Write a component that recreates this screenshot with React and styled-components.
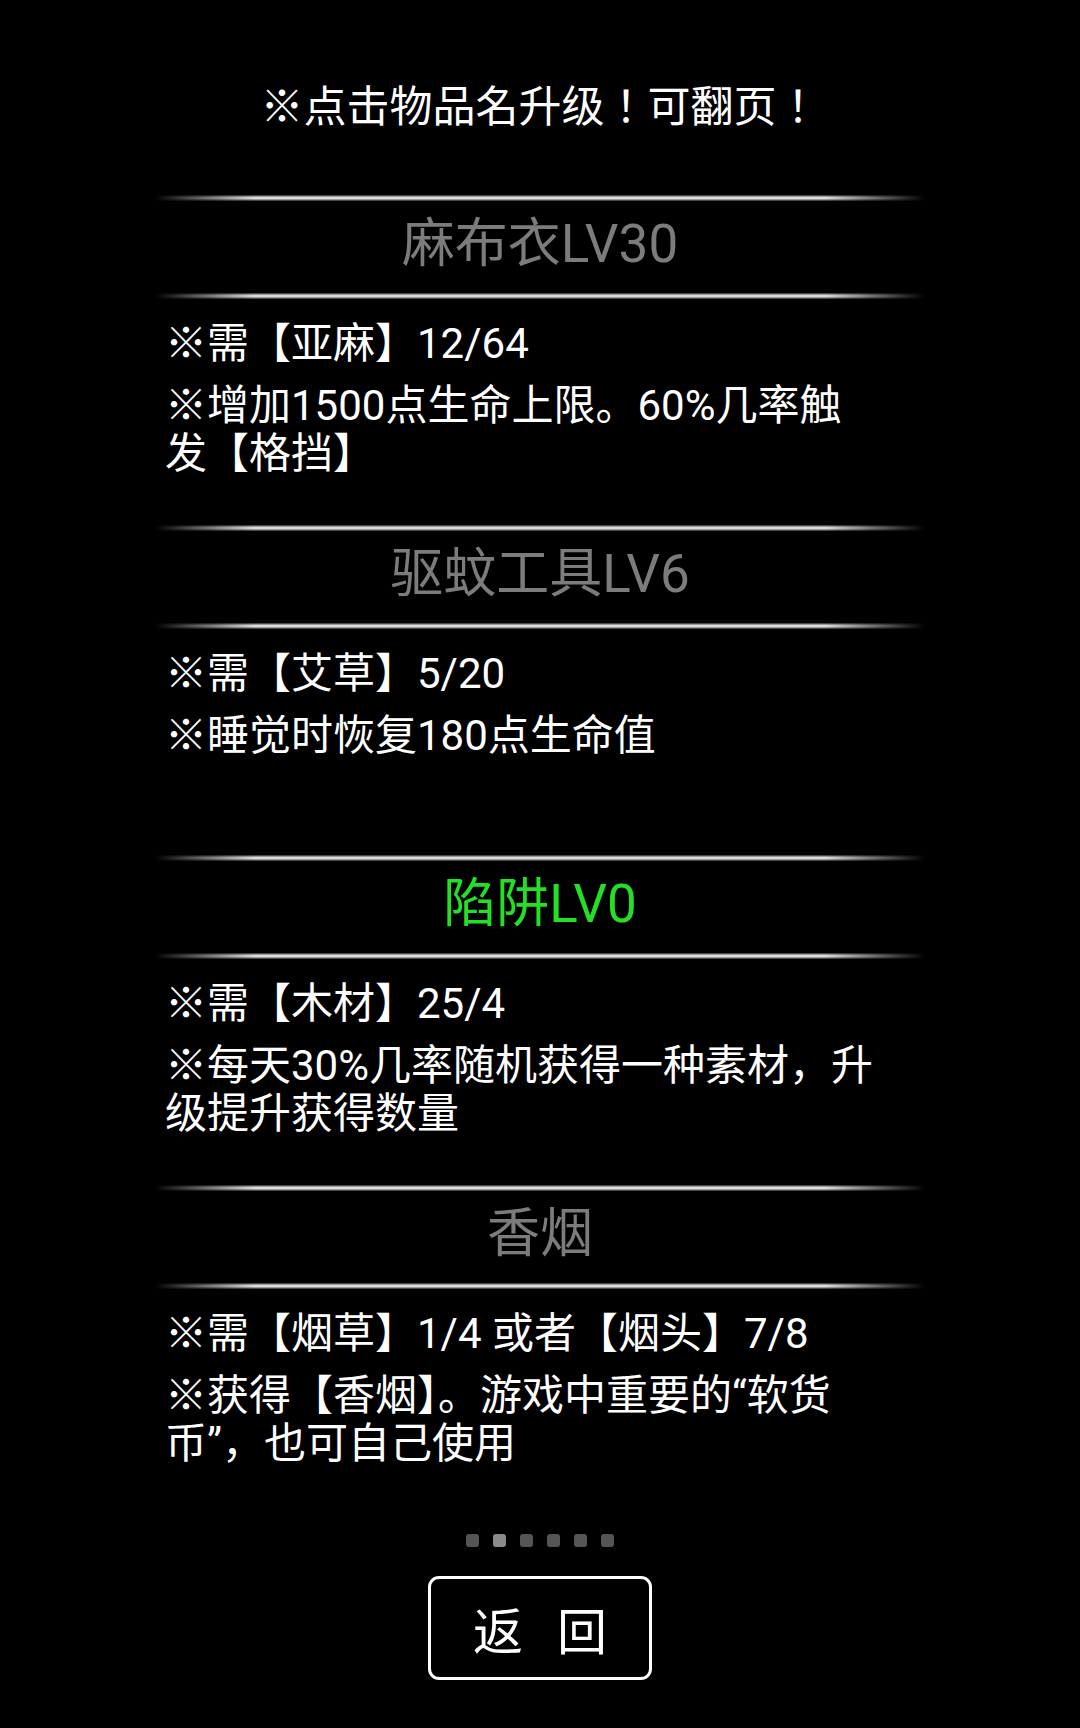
import React from 'react'
import styled, { createGlobalStyle } from 'styled-components'

const GlobalStyle = createGlobalStyle`
  html, body {
    margin: 0;
    padding: 0;
    background: #000;
  }
  body {
    font-family: Roboto, "Noto Sans CJK SC", sans-serif;
    color: #fff;
  }
`

const Screen = styled.div`
  width: 1080px;
  min-height: 1728px;
  background: #000;
  display: flex;
  flex-direction: column;
  align-items: center;
`

const Hint = styled.div`
  margin-top: 78px;
  height: 118px;
  font-size: 43px;
  line-height: 50px;
  color: #fff;
  font-family: "Noto Sans CJK TC", "Noto Sans CJK SC", sans-serif;
`

const List = styled.div`
  width: 770px;
  display: flex;
  flex-direction: column;
`

const Item = styled.div`
  height: 330px;
  display: flex;
  flex-direction: column;
`

const Divider = styled.div`
  height: 6px;
  margin: -1px 0;
  background: linear-gradient(
    to bottom,
    rgba(90, 90, 90, 0.35),
    #dcdcdc 38%,
    #dcdcdc 62%,
    rgba(90, 90, 90, 0.35)
  );
  -webkit-mask-image: linear-gradient(to right, transparent 0, #000 13%, #000 87%, transparent 100%);
  mask-image: linear-gradient(to right, transparent 0, #000 13%, #000 87%, transparent 100%);
`

const Name = styled.div`
  height: 94px;
  box-sizing: border-box;
  padding-bottom: 16px;
  display: flex;
  align-items: center;
  justify-content: center;
  font-size: 53px;
  color: ${props => (props.$active ? '#24e024' : '#7c7c7c')};
  cursor: pointer;
`

const Desc = styled.div`
  padding: 22px 0 0 10px;
  display: flex;
  flex-direction: column;
  gap: 14px;
`

const Line = styled.p`
  margin: 0;
  font-size: 42px;
  line-height: 48px;
  color: #fff;
  white-space: nowrap;
`

const Dots = styled.div`
  margin-top: 18px;
  display: flex;
  gap: 14px;
`

const Dot = styled.span`
  width: 13px;
  height: 13px;
  border-radius: 3px;
  background: ${props => (props.$current ? '#8a8a8a' : '#555')};
`

const BackButton = styled.button`
  margin-top: 29px;
  width: 224px;
  height: 104px;
  box-sizing: border-box;
  border: 3px solid #fff;
  border-radius: 11px;
  background: #000;
  color: #fff;
  display: flex;
  align-items: center;
  justify-content: center;
  gap: 34px;
  font-family: "Noto Sans CJK SC", sans-serif;
  font-size: 50px;
  padding: 0;
`

const items = [
  {
    name: '麻布衣LV30',
    lines: ['※需【亚麻】12/64', ['※增加1500点生命上限。60%几率触', '发【格挡】']],
  },
  {
    name: '驱蚊工具LV6',
    lines: ['※需【艾草】5/20', '※睡觉时恢复180点生命值'],
  },
  {
    name: '陷阱LV0',
    active: true,
    lines: ['※需【木材】25/4', ['※每天30%几率随机获得一种素材，升', '级提升获得数量']],
  },
  {
    name: '香烟',
    lines: ['※需【烟草】1/4 或者【烟头】7/8', ['※获得【香烟】。游戏中重要的“软货', '币”，也可自己使用']],
  },
]

const App = () => {
  return (
    <Screen>
      <GlobalStyle />
      <Hint>※点击物品名升级！可翻页！</Hint>
      <List>
        {items.map(item => (
          <Item key={item.name}>
            <Divider />
            <Name $active={item.active}>{item.name}</Name>
            <Divider />
            <Desc>
              {item.lines.map((line, i) => (
                <Line key={i}>
                  {Array.isArray(line)
                    ? line.map((part, j) => (
                        <React.Fragment key={j}>
                          {j > 0 && <br />}
                          {part}
                        </React.Fragment>
                      ))
                    : line}
                </Line>
              ))}
            </Desc>
          </Item>
        ))}
      </List>
      <Dots>
        {[0, 1, 2, 3, 4, 5].map(i => (
          <Dot key={i} $current={i === 1} />
        ))}
      </Dots>
      <BackButton>
        <span>返</span>
        <span>回</span>
      </BackButton>
    </Screen>
  )
}

export default App
